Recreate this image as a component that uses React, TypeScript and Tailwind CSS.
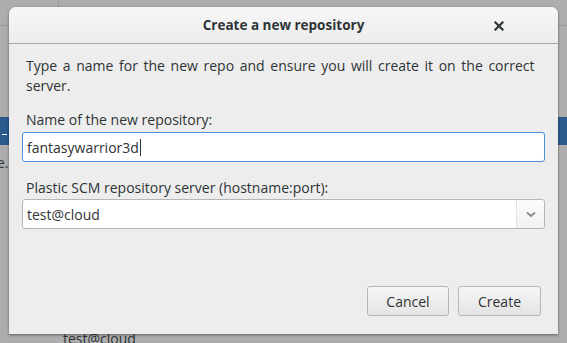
export default function App() {
  return (
    <div
      className="relative w-[567px] h-[343px] overflow-hidden bg-[#adadad] text-[#2e3436]"
      style={{ fontFamily: '"Open Sans", "DejaVu Sans", sans-serif' }}
    >
      {/* window behind the dialog */}
      <div className="absolute left-0 right-0 top-[25px] h-px bg-[#9a9a9a]" />
      <div className="absolute left-[58px] top-0 h-[7px] w-px bg-[#9a9a9a]" />
      <div className="absolute left-0 right-0 top-[117px] h-[28px] bg-[#2b5a8e]" />
      <div className="absolute left-[2px] top-[134px] h-px w-[5px] bg-white" />
      <div className="absolute left-[-3px] top-[152px] text-[14px] text-[#2e3436]">e.</div>
      <div className="absolute left-[63px] top-[328px] text-[14px] text-[#2e3436]">test@cloud</div>

      <div className="relative pl-[9px] pt-[7px]">
        <div className="w-[549px] h-[327px] flex flex-col bg-[#ededed] rounded-t-[7px] shadow-[0_1px_3px_rgba(0,0,0,0.45)]">
          <div className="relative h-[37px] shrink-0 flex items-center justify-center rounded-t-[7px] bg-gradient-to-b from-[#f7f7f7] to-[#ececec] border-b border-[#a7a7a7]">
            <span className="text-[13.5px] font-bold text-[#2e3436]">Create a new repository</span>
            <svg className="absolute right-[54px] top-[14px]" width="10" height="10" viewBox="0 0 10 10">
              <path d="M1.5 1.5 L8.5 8.5 M8.5 1.5 L1.5 8.5" stroke="#2e3436" strokeWidth="2.2" strokeLinecap="square" />
            </svg>
          </div>

          <div className="flex-1 flex flex-col px-[13px] pt-[12px] pb-[18px]">
            <p className="px-[4px] text-[14px] leading-[20px] [word-spacing:2px]">
              Type a name for the new repo and ensure you will create it on the correct server.
            </p>

            <label className="mt-[14px] px-[4px] text-[14px] leading-[20px]">Name of the new repository:</label>
            <div className="mt-[2px] h-[30px] flex items-center rounded-[3px] border border-[#4a90d9] bg-white px-[4px] text-[14px]">
              <span>fantasywarrior3d</span>
              <span className="ml-px h-[17px] w-px bg-[#2e3436]" />
            </div>

            <label className="mt-[16px] px-[4px] text-[14px] leading-[20px]">
              Plastic SCM repository server (hostname:port):
            </label>
            <div className="mt-[1px] h-[30px] flex rounded-[3px] border border-[#b6b6b6] bg-white text-[14px]">
              <div className="flex-1 flex items-center px-[4px]">test@cloud</div>
              <div className="w-[28px] flex items-center justify-center border-l border-[#e3e3e3] bg-gradient-to-b from-[#fbfbfb] to-[#f1f1f1] rounded-r-[3px]">
                <svg width="10" height="7" viewBox="0 0 10 7">
                  <path d="M1 1.5 L5 5 L9 1.5" fill="none" stroke="#8a8a8a" strokeWidth="1.8" />
                </svg>
              </div>
            </div>

            <div className="mt-auto flex justify-end gap-[9px] pr-[4px]">
              <button className="w-[82px] h-[30px] rounded-[3px] border border-[#b6b6b6] bg-gradient-to-b from-[#f6f6f6] to-[#e4e4e4] text-[14px] text-[#2e3436]">
                Cancel
              </button>
              <button className="w-[83px] h-[30px] rounded-[3px] border border-[#b6b6b6] bg-gradient-to-b from-[#f6f6f6] to-[#e4e4e4] text-[14px] text-[#2e3436]">
                Create
              </button>
            </div>
          </div>
        </div>
      </div>
    </div>
  );
}
